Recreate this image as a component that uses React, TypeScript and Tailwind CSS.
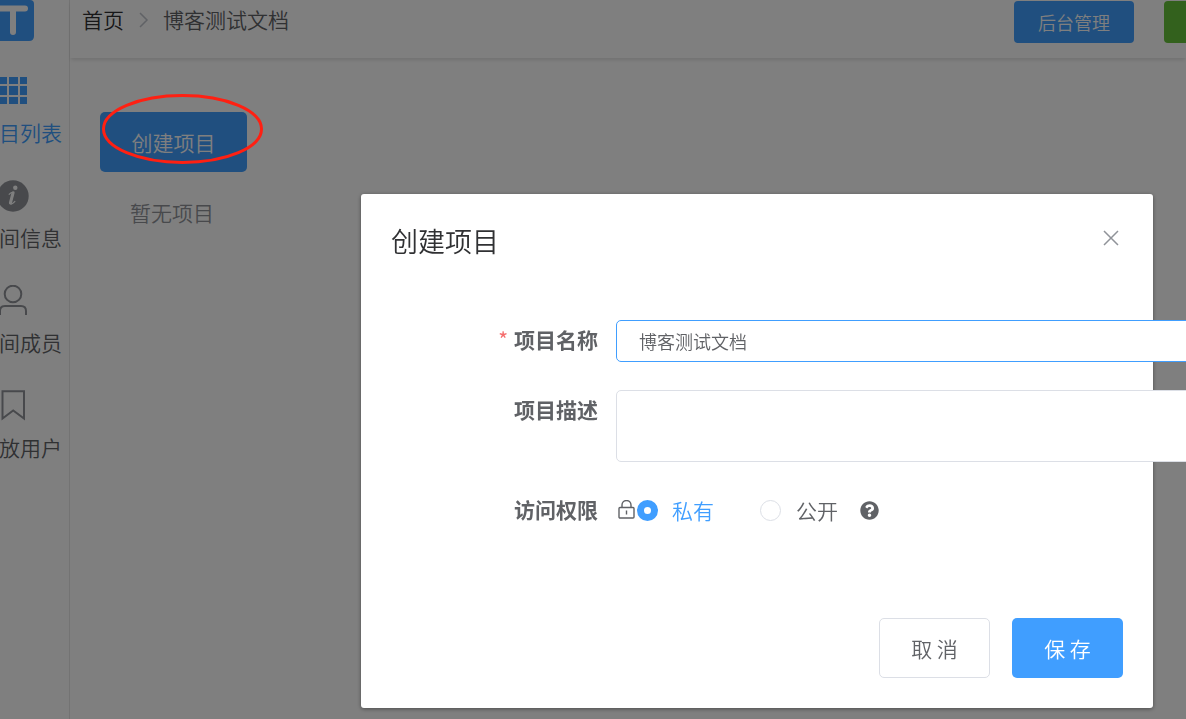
import { useState } from 'react';
import type { ReactNode } from 'react';
import { FaQuestionCircle } from 'react-icons/fa';

type NavItem = {
  label: string;
  active?: boolean;
  icon: ReactNode;
};

const navItems: NavItem[] = [
  {
    label: '目列表',
    active: true,
    icon: (
      <g fill="currentColor">
        <path d="M0 2h7v7H0zM9 2h9v7H9zM20 2h7v7h-7z" />
        <path d="M0 11h7v9H0zM9 11h9v9H9zM20 11h7v9h-7z" />
        <path d="M0 22h7v7H0zM9 22h9v7H9zM20 22h7v7h-7z" />
      </g>
    ),
  },
  {
    label: '间信息',
    icon: (
      <>
        <circle cx="13" cy="16" r="15.7" fill="currentColor" />
        <circle cx="15.3" cy="7.8" r="2.2" fill="#fff" />
        <path d="M8.8 14.6c2-2.2 3.6-2.6 5-2.4l-3.2 10.6c-.5 2 1.6 1.6 4.6-1.6" fill="none" stroke="#fff" strokeWidth="1.2" />
        <path d="M13 13 10.4 23" fill="none" stroke="#fff" strokeWidth="3" strokeLinecap="round" />
      </>
    ),
  },
  {
    label: '间成员',
    icon: (
      <g fill="none" stroke="currentColor" strokeWidth="2">
        <circle cx="13" cy="9" r="8.3" />
        <path d="M0 30v-4q0-5 5-5h16q5 0 5 5v4" />
      </g>
    ),
  },
  {
    label: '放用户',
    icon: <path d="M2.5 1.2H24V28.5L13.2 20.5 2.5 28.5z" fill="none" stroke="currentColor" strokeWidth="2" />,
  },
];

const Sidebar = () => {
  return (
    <aside className="w-[70px] shrink-0 border-r border-[#e6e6e6]">
      <svg className="block h-[41px] w-[34px]" viewBox="0 0 34 41">
        <path d="M0 0h30q4 0 4 4v32q0 5-5 5H0z" fill="#409eff" />
        <path d="M-3 8.5H25M13 8.5V32" fill="none" stroke="#fff" strokeWidth="6" strokeLinecap="round" />
      </svg>
      <nav className="flex flex-col gap-[35px] pt-[34px]">
        {navItems.map((item) => (
          <a
            key={item.label}
            href="#"
            className={`flex flex-col gap-3 ${item.active ? 'text-[#409eff]' : 'text-[#606266]'}`}
          >
            <svg
              className={`h-8 w-[30px] ${item.active ? 'text-[#409eff]' : 'text-[#909399]'}`}
              viewBox="0 0 30 32"
            >
              {item.icon}
            </svg>
            <span className="-ml-px whitespace-nowrap text-[21px] leading-[26px]">{item.label}</span>
          </a>
        ))}
      </nav>
    </aside>
  );
};

const Header = () => {
  return (
    <header className="flex items-start justify-between pb-[15px] pl-3 pt-px shadow-[0_3px_4px_-1px_rgba(0,0,0,0.12)]">
      <div className="flex h-[38px] items-center text-[21px]">
        <a href="#" className="text-[#303133]">
          首页
        </a>
        <svg className="mx-[14px] h-4 w-[11px]" viewBox="0 0 11 16" fill="none" stroke="#c0c4cc" strokeWidth="1.5">
          <path d="M2 1l7 7-7 7" />
        </svg>
        <span className="text-[#606266]">博客测试文档</span>
      </div>
      <div className="flex gap-[30px]">
        <button type="button" className="h-[42px] w-[120px] rounded-[4px] bg-[#409eff] text-lg text-white">
          后台管理
        </button>
        <button type="button" aria-label="更多" className="h-[42px] w-[22px] rounded-l-[4px] bg-[#67c23a]" />
      </div>
    </header>
  );
};

const Projects = () => {
  return (
    <main className="px-[30px] pt-[54px]">
      <div className="relative w-fit">
        <button
          type="button"
          className="block h-[60px] w-[147px] rounded-[5px] bg-[#409eff] pt-0.5 text-[21px] text-white"
        >
          创建项目
        </button>
        {/* hand-drawn marker, stays above the mask */}
        <svg
          className="pointer-events-none absolute -top-5 left-0 z-20 h-[74px] w-[166px]"
          viewBox="0 0 166 74"
          fill="none"
        >
          <ellipse cx="82.5" cy="37" rx="79" ry="33.5" stroke="#ff2012" strokeWidth="3" />
        </svg>
      </div>
      <p className="px-[30px] pt-6 text-[21px] leading-8 text-[#909399]">暂无项目</p>
    </main>
  );
};

const labelClass = 'w-[207px] shrink-0 text-right text-[21px] font-bold leading-[38px]';
const radioClass =
  'size-[21px] shrink-0 appearance-none rounded-full border border-[#dcdfe6] bg-white checked:border-[7px] checked:border-[#409eff]';

const CreateProjectDialog = () => {
  const [name, setName] = useState('博客测试文档');
  const [description, setDescription] = useState('');
  const [access, setAccess] = useState('private');

  return (
    <div className="fixed inset-0 z-10 overflow-hidden bg-black/50 pl-[361px] pr-[33px] pt-[194px]">
      <div
        role="dialog"
        aria-labelledby="dialog-title"
        className="rounded-[3px] bg-white p-[30px] text-[#606266] shadow-[0_1px_4px_rgba(0,0,0,0.4)]"
      >
        <div className="flex items-start justify-between">
          <h2 id="dialog-title" className="text-[27px] leading-[34px] text-[#303133]">
            创建项目
          </h2>
          <button type="button" aria-label="关闭" className="flex h-7 w-6 items-center justify-center">
            <svg className="size-4" viewBox="0 0 16 16" fill="none" stroke="#909399" strokeWidth="1.5">
              <path d="M1 1l14 14M15 1L1 15" />
            </svg>
          </button>
        </div>

        <form className="flex flex-col gap-7 pt-[62px]">
          <div className="flex gap-[18px]">
            <label htmlFor="name" className={labelClass}>
              <span className="mr-1.5 font-normal text-[#f56c6c]">*</span>
              项目名称
            </label>
            <input
              id="name"
              type="text"
              value={name}
              onChange={(e) => setName(e.target.value)}
              className="h-[42px] w-[600px] shrink-0 rounded-[5px] border border-[#409eff] bg-white px-[22px] text-lg outline-none"
            />
          </div>

          <div className="flex gap-[18px]">
            <label htmlFor="description" className={labelClass}>
              项目描述
            </label>
            <textarea
              id="description"
              value={description}
              onChange={(e) => setDescription(e.target.value)}
              className="h-[72px] w-[600px] shrink-0 resize-none rounded-[5px] border border-[#dcdfe6] bg-white px-[22px] py-2 text-lg outline-none"
            />
          </div>

          <div role="radiogroup" aria-labelledby="access-label" className="flex h-10 items-start gap-[18px]">
            <span id="access-label" className={labelClass}>
              访问权限
            </span>
            <div className="flex h-10 items-center text-[21px] leading-8">
              <svg className="h-5 w-[21px]" viewBox="0 0 21 20" fill="none" stroke="currentColor" strokeWidth="1.4">
                <rect x="3" y="7.5" width="15" height="10.5" rx="1" />
                <path d="M6 7.5V5a4.5 4.5 0 0 1 9 0V7.5M10.5 10.5v4" />
              </svg>
              <label className="flex items-center gap-[14px] has-checked:text-[#409eff]">
                <input
                  type="radio"
                  name="access"
                  value="private"
                  checked={access === 'private'}
                  onChange={() => setAccess('private')}
                  className={radioClass}
                />
                私有
              </label>
              <label className="ml-[46px] flex items-center gap-[15px] has-checked:text-[#409eff]">
                <input
                  type="radio"
                  name="access"
                  value="public"
                  checked={access === 'public'}
                  onChange={() => setAccess('public')}
                  className={radioClass}
                />
                公开
              </label>
              <FaQuestionCircle className="ml-[22px] size-[19px]" />
            </div>
          </div>
        </form>

        <div className="flex justify-end gap-[22px] pt-[88px]">
          <button
            type="button"
            className="h-[60px] w-[111px] rounded-[5px] border border-[#dcdfe6] bg-white pt-0.5 text-[21px]"
          >
            取 消
          </button>
          <button type="button" className="h-[60px] w-[111px] rounded-[5px] bg-[#409eff] pt-0.5 text-[21px] text-white">
            保 存
          </button>
        </div>
      </div>
    </div>
  );
};

const App = () => {
  return (
    <div className="flex min-h-screen bg-white font-['Noto_Sans_CJK_SC',sans-serif] font-[350]">
      <Sidebar />
      <div className="min-w-0 flex-1">
        <Header />
        <Projects />
      </div>
      <CreateProjectDialog />
    </div>
  );
};

export default App;
